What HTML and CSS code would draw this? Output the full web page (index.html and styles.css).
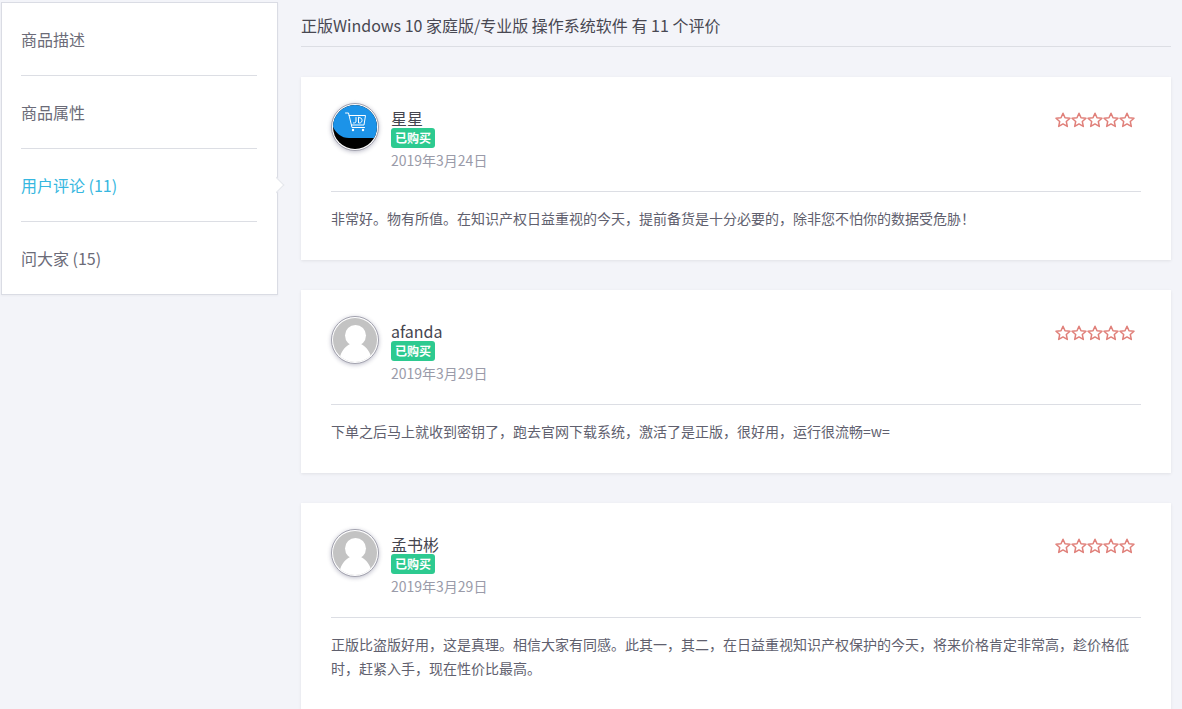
FILE: index.html
```
<!DOCTYPE html>
<html lang="zh-CN">
  <head>
    <meta charset="UTF-8" />
    <meta name="viewport" content="width=device-width, initial-scale=1.0" />
    <title>用户评论</title>
    <link rel="stylesheet" href="styles.css">
  </head>
  <body>
    <svg class="sprite" aria-hidden="true">
      <symbol id="star" viewBox="0 0 16 16">
        <path d="M8 1.200l2 4.500 5 .5-3.700 3.300 1 4.900L8 11.900l-4.300 2.500 1-4.900L1 6.200l5-.5z" />
      </symbol>
      <symbol id="user" viewBox="0 0 44 44">
        <rect width="44" height="44" fill="#c3c3c3" />
        <circle cx="22.500" cy="17.500" r="10.500" fill="#fff" />
        <path d="M6 46c0-10 5-17 11-20h11c6 3 11 10 11 20z" fill="#fff" />
      </symbol>
    </svg>
    <div class="container">
      <nav class="tabs">
        <a class="tab" href="#desc">商品描述</a>
        <a class="tab" href="#attr">商品属性</a>
        <a class="tab active" href="#comments">用户评论 (11)</a>
        <a class="tab" href="#ask">问大家 (15)</a>
      </nav>
      <main class="comments" id="comments">
        <h2 class="title">正版Windows 10 家庭版/专业版 操作系统软件 有 11 个评价</h2>
        <div class="list">
          <article class="card">
            <div class="header">
              <svg class="avatar" viewBox="0 0 44 44">
                <rect width="44" height="44" fill="#000" />
                <path d="M0 0h44v33H16C8 33 3 28 0 22z" fill="#1c93e8" />
                <g fill="none" stroke="#fff" stroke-linecap="round" stroke-linejoin="round">
                  <path d="M12.500 8h3l3.500 14.500h12.500" />
                  <path d="M16.200 10.500h16.300l-1.500 9.500H18.500" />
                  <path d="M23 12.500v3.500c0 1.500-.5 2-2.500 2M25.500 12.500V18h1c3.500 0 3.500-5.500 0-5.500z" />
                </g>
                <circle cx="20" cy="25" r="1.200" fill="#fff" />
                <circle cx="30" cy="25" r="1.200" fill="#fff" />
              </svg>
              <div class="info">
                <div class="name">星星</div>
                <span class="badge">已购买</span>
                <time class="date" datetime="2019-03-24">2019年3月24日</time>
              </div>
              <div class="stars">
                <svg><use href="#star" /></svg>
                <svg><use href="#star" /></svg>
                <svg><use href="#star" /></svg>
                <svg><use href="#star" /></svg>
                <svg><use href="#star" /></svg>
              </div>
            </div>
            <p class="text">非常好。物有所值。在知识产权日益重视的今天，提前备货是十分必要的，除非您不怕你的数据受危胁！</p>
          </article>
          <article class="card">
            <div class="header">
              <svg class="avatar"><use href="#user" /></svg>
              <div class="info">
                <div class="name">afanda</div>
                <span class="badge">已购买</span>
                <time class="date" datetime="2019-03-29">2019年3月29日</time>
              </div>
              <div class="stars">
                <svg><use href="#star" /></svg>
                <svg><use href="#star" /></svg>
                <svg><use href="#star" /></svg>
                <svg><use href="#star" /></svg>
                <svg><use href="#star" /></svg>
              </div>
            </div>
            <p class="text">下单之后马上就收到密钥了，跑去官网下载系统，激活了是正版，很好用，运行很流畅=w=</p>
          </article>
          <article class="card">
            <div class="header">
              <svg class="avatar"><use href="#user" /></svg>
              <div class="info">
                <div class="name">孟书彬</div>
                <span class="badge">已购买</span>
                <time class="date" datetime="2019-03-29">2019年3月29日</time>
              </div>
              <div class="stars">
                <svg><use href="#star" /></svg>
                <svg><use href="#star" /></svg>
                <svg><use href="#star" /></svg>
                <svg><use href="#star" /></svg>
                <svg><use href="#star" /></svg>
              </div>
            </div>
            <p class="text">正版比盗版好用，这是真理。相信大家有同感。此其一，其二，在日益重视知识产权保护的今天，将来价格肯定非常高，趁价格低时，赶紧入手，现在性价比最高。</p>
          </article>
        </div>
      </main>
    </div>
  </body>
</html>
```
FILE: styles.css
```
* {
  padding: 0;
  margin: 0;
  box-sizing: border-box;
}
body {
  font-family: 'Noto Sans CJK SC', sans-serif;
  font-size: 14px;
  line-height: 24px;
  color: #60606e;
  background: #f3f4f9;
}
.sprite {
  display: none;
}
.container {
  display: flex;
  align-items: flex-start;
  gap: 23px;
  padding: 2px 11px 0 1px;
}
.tabs {
  flex: none;
  width: 277px;
  padding: 0 20px 0 19px;
  background: #fff;
  border: 1px solid #dadce4;
  box-shadow: 0 1px 2px rgba(0, 0, 0, 0.04);
}
.tab {
  display: block;
  position: relative;
  padding: 24px 0;
  font-size: 16px;
  color: #6b6b78;
  text-decoration: none;
}
.tab + .tab {
  border-top: 1px solid #dcdee4;
}
.tab.active {
  color: #36b7e0;
}
/* arrow on the right edge of the panel */
.tab.active::after {
  content: '';
  position: absolute;
  top: 50%;
  right: -25px;
  width: 10px;
  height: 10px;
  margin-top: -6px;
  background: #fff;
  border: 1px solid #e4e6ec;
  border-left-color: transparent;
  border-bottom-color: transparent;
  transform: rotate(45deg);
}
.comments {
  flex: 1;
  min-width: 0;
}
.title {
  padding: 11px 0 9px;
  margin-bottom: 30px;
  font-size: 16px;
  font-weight: normal;
  color: #484852;
  border-bottom: 1px solid #dcdee4;
}
.list {
  display: grid;
  gap: 30px;
}
.card {
  padding: 26px 30px 30px;
  background: #fff;
  box-shadow: 0 1px 3px rgba(0, 0, 0, 0.08);
}
.header {
  display: flex;
  align-items: flex-start;
  padding-bottom: 18px;
  margin-bottom: 14px;
  border-bottom: 1px solid #dcdee4;
}
.avatar {
  flex: none;
  width: 48px;
  height: 48px;
  padding: 1px;
  border: 1px solid #a2a2ae;
  border-radius: 50%;
  background: #fff;
  box-shadow: 0 1px 4px rgba(40, 40, 80, 0.3);
}
.info {
  flex: 1;
  padding: 5px 0 0 12px;
}
.name {
  font-size: 16px;
  line-height: 20px;
  color: #45454f;
}
.badge {
  display: block;
  width: max-content;
  padding: 0 4px;
  font-size: 12px;
  font-weight: bold;
  line-height: 20px;
  color: #fff;
  background: #2dca90;
  border-radius: 3px;
}
.date {
  display: block;
  padding-bottom: 1px;
  color: #9a9ba9;
}
.stars {
  display: flex;
  padding: 9px 6px 0 0;
}
.stars svg {
  width: 16px;
  height: 16px;
  fill: none;
  stroke: #e0807a;
  stroke-width: 1.5;
  stroke-linejoin: round;
}
.text {
  line-height: 24px;
}
```
